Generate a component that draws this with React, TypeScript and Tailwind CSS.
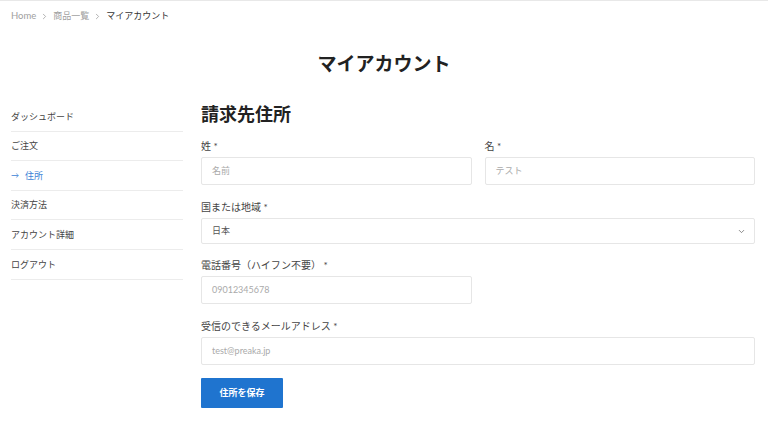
import { ChevronRight, ChevronDown } from "lucide-react";

const jp = "font-['Lato','Noto_Sans_CJK_JP',sans-serif]";

const menu = [
  { label: "ダッシュボード" },
  { label: "ご注文" },
  { label: "住所", active: true },
  { label: "決済方法" },
  { label: "アカウント詳細" },
  { label: "ログアウト" },
];

function Field({
  label,
  children,
  className = "",
}: {
  label: string;
  children: React.ReactNode;
  className?: string;
}) {
  return (
    <div className={className}>
      <div className="text-[10px] leading-[14px] text-[#444] mb-[4px]">{label}</div>
      {children}
    </div>
  );
}

function TextBox({ value }: { value: string }) {
  return (
    <div className="h-[28px] w-full border border-[#e6e6e6] rounded-[2px] px-[10px] flex items-center text-[9px] text-[#aaa] bg-white">
      {value}
    </div>
  );
}

export default function App() {
  return (
    <div className={`w-[768px] h-[442px] bg-white border-t border-[#e8e8e8] ${jp}`}>
      {/* breadcrumb */}
      <div className="flex items-center gap-[3px] pl-[11px] pt-[8px] text-[9.5px] leading-[14px] text-[#a0a0a0]">
        <span>Home</span>
        <ChevronRight size={9} strokeWidth={2} className="text-[#999] mx-[1px]" />
        <span className="text-[9px]">商品一覧</span>
        <ChevronRight size={9} strokeWidth={2} className="text-[#999] mx-[1px]" />
        <span className="text-[9px] text-[#333]">マイアカウント</span>
      </div>

      <h1 className="text-center text-[19px] leading-[24px] font-bold text-[#222] mt-[29px]">
        マイアカウント
      </h1>

      <div className="flex pl-[11px] pr-[13px] mt-[26px] gap-[18px]">
        {/* sidebar */}
        <nav className="w-[172px] shrink-0">
          {menu.map((m) => (
            <div
              key={m.label}
              className={`h-[29.6px] flex items-center border-b border-[#ececec] text-[9px] ${
                m.active ? "text-[#3b7fd6]" : "text-[#444]"
              }`}
            >
              {m.active && <span className="mr-[6px] text-[8px]">→</span>}
              {m.label}
            </div>
          ))}
        </nav>

        {/* form */}
        <div className="flex-1">
          <h2 className="text-[18px] leading-[24px] font-bold text-[#222] mb-[13px]">請求先住所</h2>

          <div className="flex gap-[13px]">
            <Field label="姓 *" className="flex-1">
              <TextBox value="名前" />
            </Field>
            <Field label="名 *" className="flex-1">
              <TextBox value="テスト" />
            </Field>
          </div>

          <Field label="国または地域 *" className="mt-[15px]">
            <div className="h-[26px] w-full border border-[#e6e6e6] rounded-[2px] pl-[10px] pr-[8px] flex items-center justify-between text-[9px] text-[#555]">
              <span>日本</span>
              <ChevronDown size={9} strokeWidth={2} className="text-[#666]" />
            </div>
          </Field>

          <Field label="電話番号（ハイフン不要） *" className="mt-[14px] w-[271px]">
            <TextBox value="09012345678" />
          </Field>

          <Field label="受信のできるメールアドレス *" className="mt-[15px]">
            <TextBox value="test@preaka.jp" />
          </Field>

          <button className="mt-[13px] h-[30px] w-[82px] bg-[#1f74cf] text-white text-[9px] font-bold rounded-[1px]">
            住所を保存
          </button>
        </div>
      </div>
    </div>
  );
}
